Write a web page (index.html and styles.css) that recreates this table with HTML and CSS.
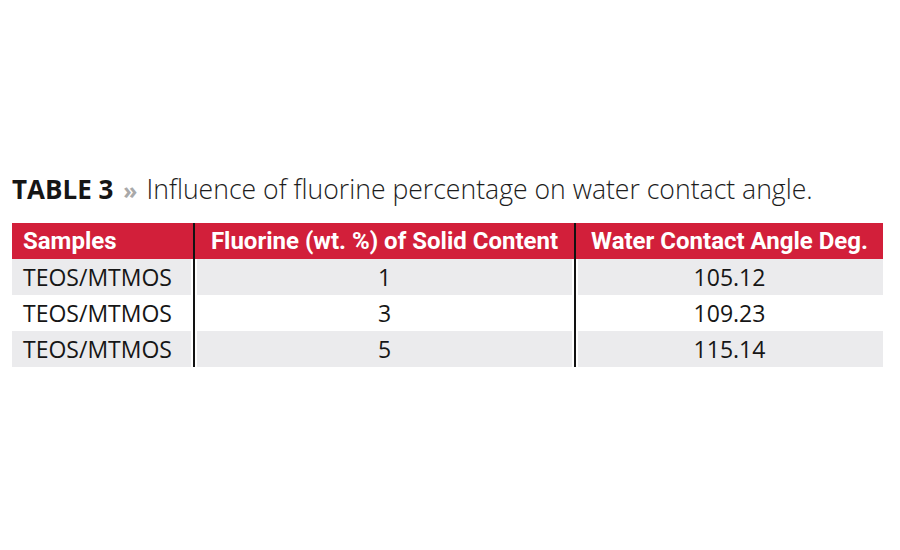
FILE: index.html
```html
<!DOCTYPE html>
<html lang="en">
<head>
<meta charset="utf-8">
<title>Table 3</title>
<link rel="stylesheet" href="styles.css">
</head>
<body>
<main class="figure">
  <h1 class="caption"><span class="label">TABLE 3</span><span class="chev">»</span><span class="desc">Influence of fluorine percentage on water contact angle.</span></h1>
  <table class="data">
    <colgroup>
      <col class="w1">
      <col class="w2">
      <col class="w3">
    </colgroup>
    <thead>
      <tr>
        <th class="c1">Samples</th>
        <th class="c2">Fluorine (wt. %) of Solid Content</th>
        <th class="c3">Water Contact Angle Deg.</th>
      </tr>
    </thead>
    <tbody>
      <tr class="shade"><td class="c1">TEOS/MTMOS</td><td class="c2">1</td><td class="c3">105.12</td></tr>
      <tr><td class="c1">TEOS/MTMOS</td><td class="c2">3</td><td class="c3">109.23</td></tr>
      <tr class="shade"><td class="c1">TEOS/MTMOS</td><td class="c2">5</td><td class="c3">115.14</td></tr>
    </tbody>
  </table>
</main>
</body>
</html>
```
FILE: styles.css
```css
html, body {
  margin: 0;
  padding: 0;
  background: #ffffff;
}
body {
  width: 900px;
  height: 550px;
  font-family: "Open Sans", "Liberation Sans", sans-serif;
  color: #1a1a1a;
}
.figure {
  padding: 171px 16px 0 12px;
}
.caption {
  margin: 0;
  font-size: 26px;
  line-height: 36px;
  font-weight: 300;
  white-space: nowrap;
  color: #1d1d1d;
}
.label {
  font-weight: 700;
  color: #151515;
}
.chev {
  font-weight: 700;
  color: #a9a9a9;
  font-size: 23px;
  margin: 0 9px 0 10px;
}
.desc {
  font-weight: 300;
  font-size: 26.6px;
}
.data {
  margin-top: 15px;
  width: 871px;
  border-collapse: collapse;
  table-layout: fixed;
}
.data col.w1 { width: 182px; }
.data col.w2 { width: 381px; }
.data col.w3 { width: 308px; }
.data th {
  background: #d21f3a;
  color: #ffffff;
  height: 36px;
  padding: 0;
  font-family: "Roboto", "Liberation Sans", sans-serif;
  font-weight: 700;
  font-size: 24px;
  text-align: center;
  white-space: nowrap;
  overflow: hidden;
}
.data th.c1 {
  text-align: left;
  padding-left: 11px;
}
.data td {
  height: 36px;
  padding: 0;
  font-size: 23px;
  font-weight: 400;
  color: #161616;
  text-align: center;
  white-space: nowrap;
}
.data td.c1 {
  text-align: left;
  padding-left: 11px;
}
.data .c2, .data .c3 {
  border-left: 2px solid #121212;
}
.data tr.shade td {
  background: #ebebed;
}
.data tr.shade td.c1 { box-shadow: inset -2px 0 0 #ffffff; }
.data tr.shade td.c2 { box-shadow: inset 2px 0 0 #ffffff, inset -2px 0 0 #ffffff; }
.data tr.shade td.c3 { box-shadow: inset 2px 0 0 #ffffff; }
```
